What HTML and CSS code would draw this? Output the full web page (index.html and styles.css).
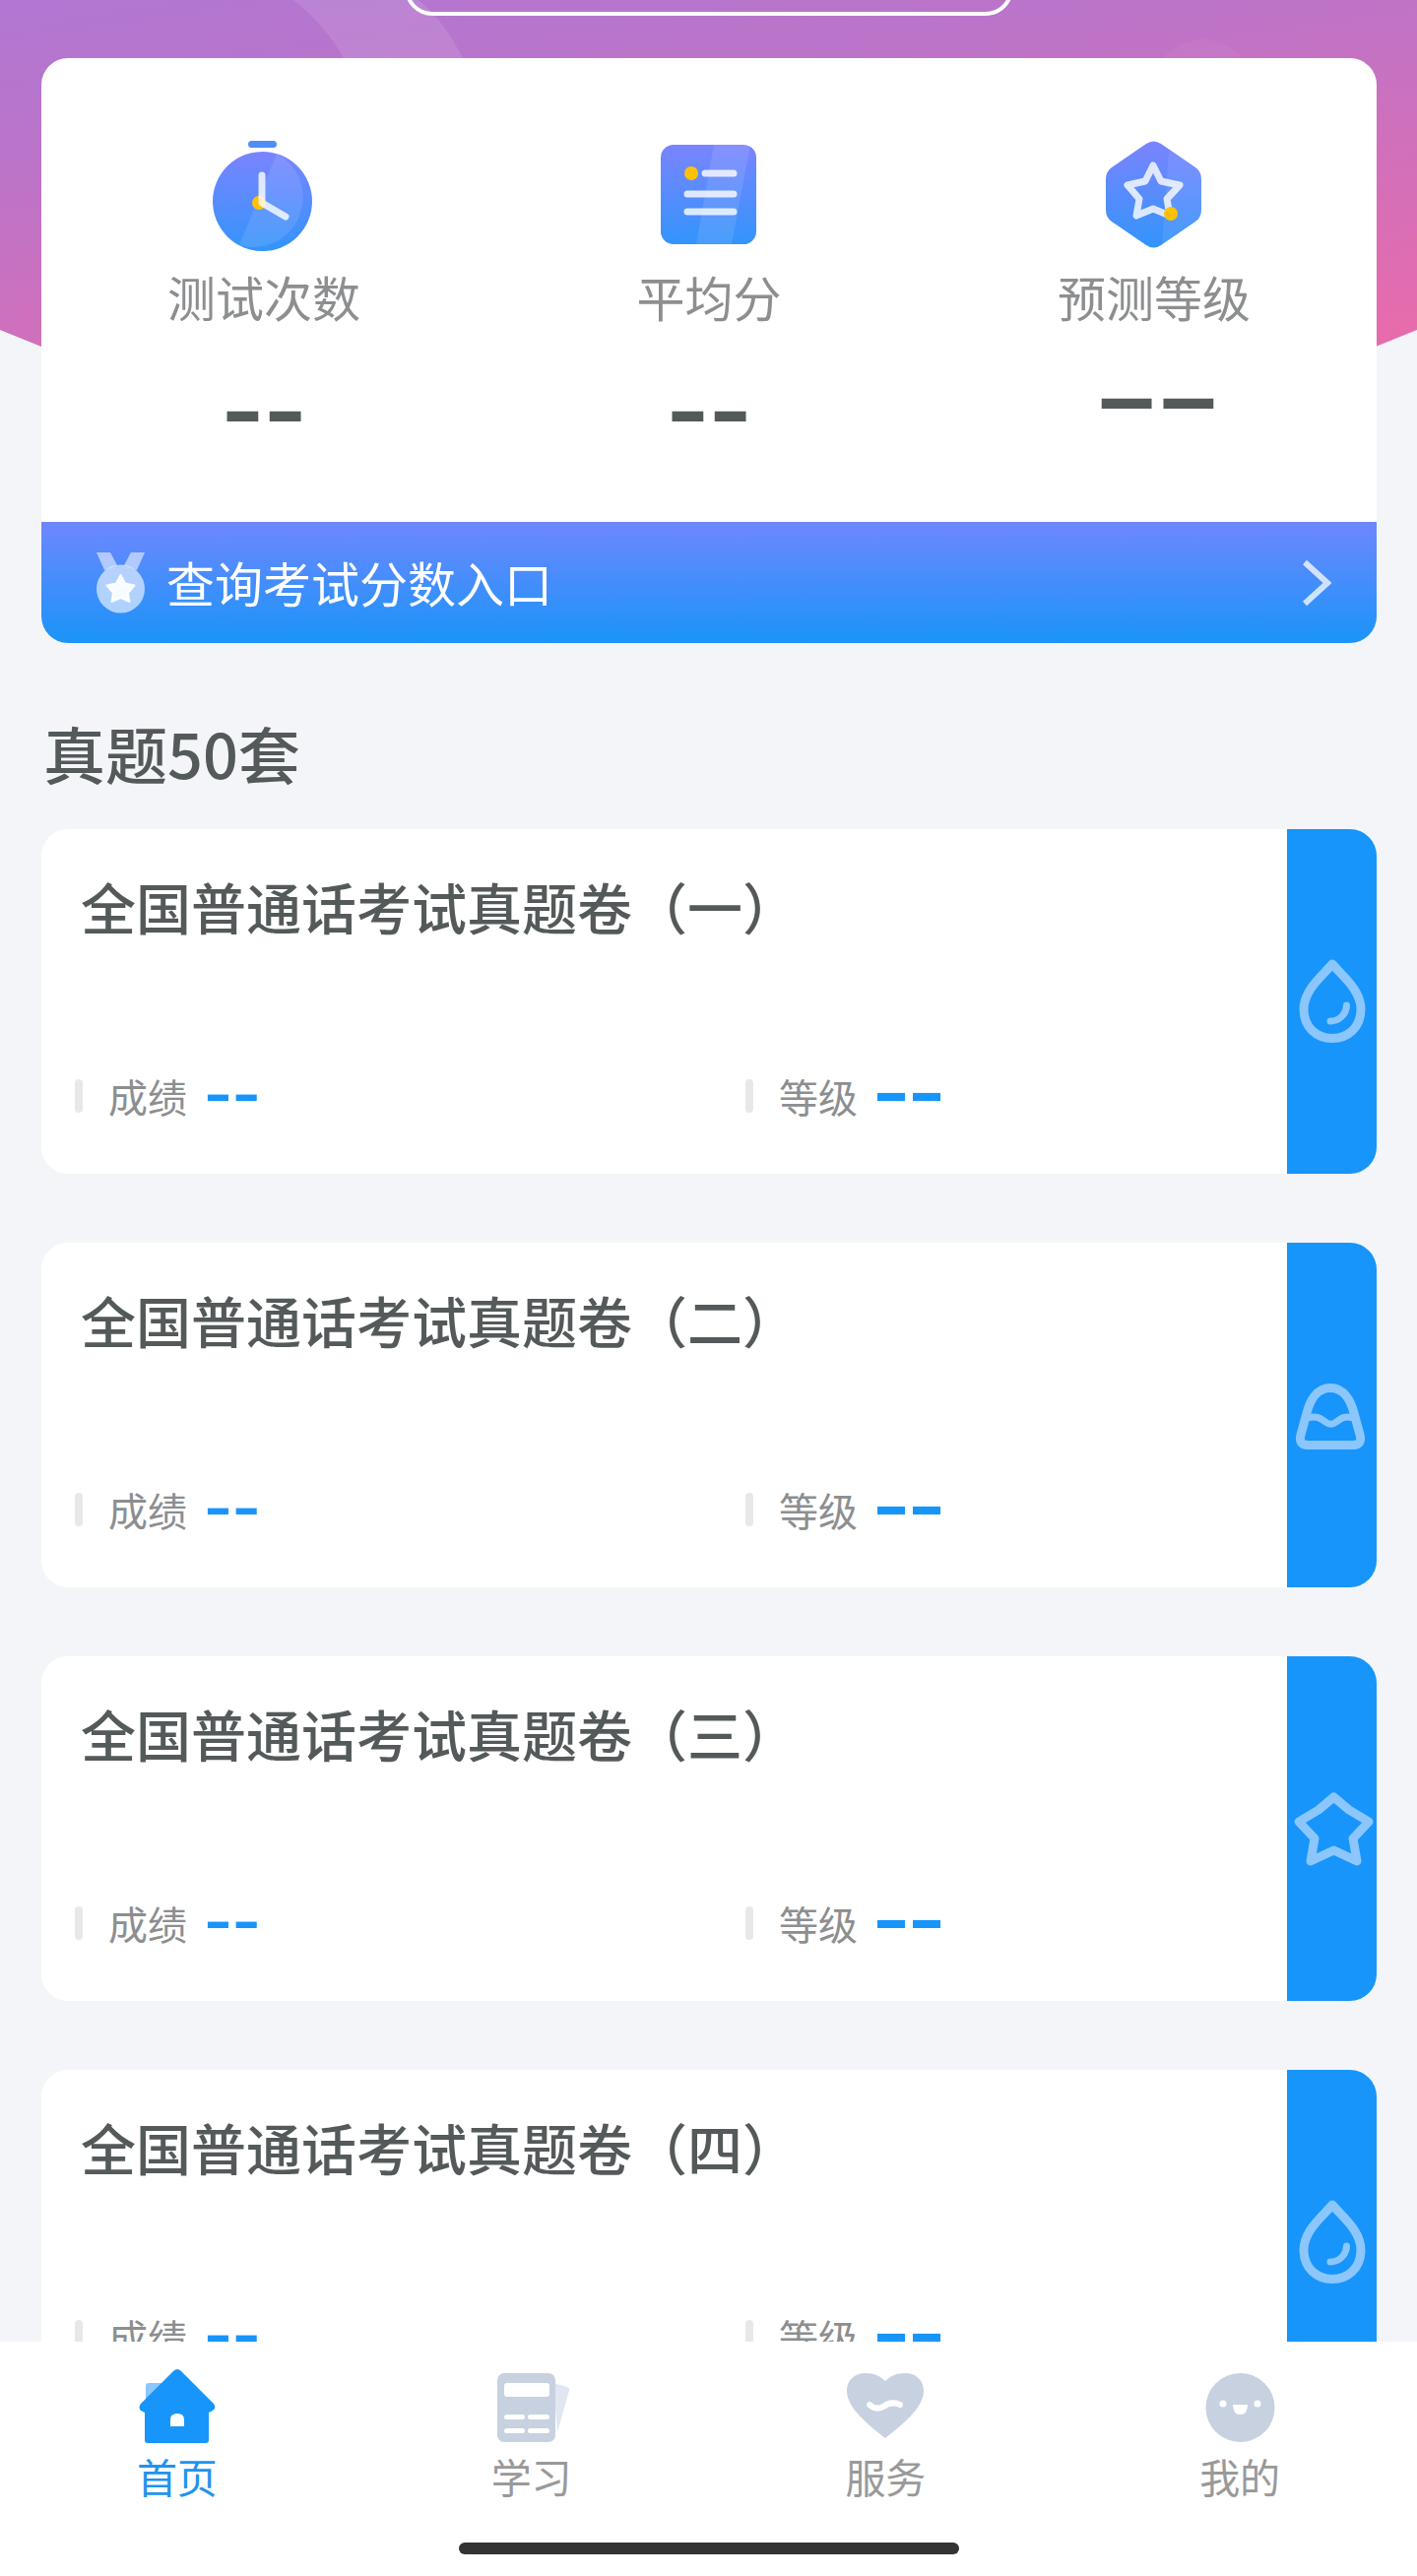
FILE: index.html
```html
<!DOCTYPE html>
<html lang="zh-CN">
<head>
    <meta charset="UTF-8">
    <meta name="viewport" content="width=device-width, initial-scale=1.0">
    <title>普通话考试</title>
    <link rel="stylesheet" href="styles.css">
</head>
<body>
    <svg class="sprite" width="0" height="0">
        <defs>
            <linearGradient id="statFill" x1="0" y1="0" x2="0" y2="1">
                <stop offset="0" stop-color="#7a84ff"/>
                <stop offset="1" stop-color="#3394fb"/>
            </linearGradient>
            <symbol id="drop" viewBox="0 0 80 100">
                <path d="M40 12 C30 24 11 38 11 58 C11 76 24 87.500 40 87.500 C56 87.500 69 76 69 58 C69 38 50 24 40 12 Z" fill="none" stroke="#8bc6fc" stroke-width="9" stroke-linejoin="round"/>
                <path d="M38 70 C46 70 54 64 54.500 54" fill="none" stroke="#8bc6fc" stroke-width="7" stroke-linecap="round"/>
            </symbol>
        </defs>
    </svg>

    <div class="page">
        <div class="hero">
            <svg class="hero-swoosh" width="1439" height="352" viewBox="0 0 1439 352">
                <path d="M298 0 Q330 25 349 59 L470 59 Q450 20 425 0 Z" fill="#fff" fill-opacity="0.1"/>
                <path d="M1180 59 Q1205 38 1225 40 Q1250 44 1262 59 Z" fill="#fff" fill-opacity="0.04"/>
            </svg>
            <div class="hero-search"></div>
        </div>

        <section class="stats">
            <div class="stats-body">
                <div class="stat">
                    <svg class="stat-icon" viewBox="0 0 120 120">
                        <rect x="44" y="4" width="29" height="7" rx="3.500" fill="#4f8df8"/>
                        <circle cx="58.500" cy="65.500" r="50.500" fill="url(#statFill)"/>
                        <path d="M73 17 A50.500 50.500 0 0 1 35 110 Z" fill="#fff" fill-opacity="0.1"/>
                        <circle cx="55" cy="67" r="7" fill="#ffc107"/>
                        <path d="M58 39 V67 L82 81" fill="none" stroke="#fff" stroke-opacity="0.8" stroke-width="7" stroke-linecap="round" stroke-linejoin="round"/>
                    </svg>
                    <div class="stat-label">测试次数</div>
                    <div class="stat-value">--</div>
                </div>
                <div class="stat">
                    <svg class="stat-icon" viewBox="0 0 120 120">
                        <rect x="11" y="8" width="97" height="101" rx="13" fill="url(#statFill)"/>
                        <path d="M65 8 H102 L83 109 H47 Z" fill="#fff" fill-opacity="0.1"/>
                        <circle cx="42" cy="37" r="7" fill="#ffc107"/>
                        <path d="M56 37 H85 M38 58 H85 M38 76 H85" fill="none" stroke="#fff" stroke-opacity="0.8" stroke-width="7" stroke-linecap="round"/>
                    </svg>
                    <div class="stat-label">平均分</div>
                    <div class="stat-value">--</div>
                </div>
                <div class="stat">
                    <svg class="stat-icon" viewBox="0 0 120 120">
                        <path d="M52 7 Q59.500 2 67 7 L102 31 Q108 35 108 43 V74 Q108 82 102 86 L67 110 Q59.500 115 52 110 L17 86 Q11 82 11 74 V43 Q11 35 17 31 Z" fill="url(#statFill)"/>
                        <path d="M75 14 L102 31 Q108 35 108 43 V74 Q108 82 102 86 L68 110 Z" fill="#fff" fill-opacity="0.08"/>
                        <path d="M59 29 L67 45 L86 49 L73 63 L76 80 L59 73 L42 80 L45 63 L33 49 L51 45 Z" fill="none" stroke="#fff" stroke-opacity="0.8" stroke-width="7" stroke-linejoin="round"/>
                        <circle cx="77" cy="78" r="7" fill="#ffc107"/>
                    </svg>
                    <div class="stat-label">预测等级</div>
                    <div class="stat-value stat-value-big">--</div>
                </div>
            </div>
            <a class="score-link">
                <svg class="medal" viewBox="0 0 49 62">
                    <path d="M0 0 H14 L21 13 L8 18 Z M49 0 H35 L28 13 L41 18 Z" fill="#fff" fill-opacity="0.55"/>
                    <circle cx="24.500" cy="37" r="24.500" fill="#fff" fill-opacity="0.6"/>
                    <path d="M24.500 23 L29 31.500 L38.500 33.500 L32 41 L33.500 50 L24.500 46 L15.500 50 L17 41 L10.500 33.500 L20 31.500 Z" fill="#fff" fill-opacity="0.9" stroke="#fff" stroke-opacity="0.9" stroke-width="2" stroke-linejoin="round"/>
                </svg>
                <span class="score-text">查询考试分数入口</span>
                <svg class="chevron" viewBox="0 0 30 48">
                    <path d="M3 3 L26 24 L3 45" fill="none" stroke="#fff" stroke-opacity="0.75" stroke-width="6"/>
                </svg>
            </a>
        </section>

        <h2 class="section-title">真题50套</h2>

        <div class="paper-list">
            <div class="paper">
                <div class="paper-body">
                    <div class="paper-title">全国普通话考试真题卷（一）</div>
                    <div class="paper-row">
                        <div class="paper-cell"><i class="tick"></i><span class="cell-label">成绩</span><span class="cell-value">--</span></div>
                        <div class="paper-cell"><i class="tick"></i><span class="cell-label">等级</span><span class="cell-value cell-value-wide">--</span></div>
                    </div>
                </div>
                <div class="paper-side"><svg class="side-icon" viewBox="0 0 80 100"><use href="#drop"/></svg></div>
            </div>
            <div class="paper">
                <div class="paper-body">
                    <div class="paper-title">全国普通话考试真题卷（二）</div>
                    <div class="paper-row">
                        <div class="paper-cell"><i class="tick"></i><span class="cell-label">成绩</span><span class="cell-value">--</span></div>
                        <div class="paper-cell"><i class="tick"></i><span class="cell-label">等级</span><span class="cell-value cell-value-wide">--</span></div>
                    </div>
                </div>
                <div class="paper-side">
                    <svg class="side-icon" viewBox="0 0 80 100">
                        <path d="M38 22.500 C24 22.500 17 36 14 48 L8 70 C6 77 9 80.500 15 80.500 H61 C67 80.500 70 77 68 70 L62 48 C59 36 52 22.500 38 22.500 Z" fill="none" stroke="#8bc6fc" stroke-width="9" stroke-linejoin="round"/>
                        <path d="M15 53 C24 50 29 54 33 57 C37 60 40 60 44 57 C48 54 53 50 61 53" fill="none" stroke="#8bc6fc" stroke-width="7" stroke-linecap="round"/>
                    </svg>
                </div>
            </div>
            <div class="paper">
                <div class="paper-body">
                    <div class="paper-title">全国普通话考试真题卷（三）</div>
                    <div class="paper-row">
                        <div class="paper-cell"><i class="tick"></i><span class="cell-label">成绩</span><span class="cell-value">--</span></div>
                        <div class="paper-cell"><i class="tick"></i><span class="cell-label">等级</span><span class="cell-value cell-value-wide">--</span></div>
                    </div>
                </div>
                <div class="paper-side">
                    <svg class="side-icon side-icon-star" viewBox="0 0 90 100">
                        <path d="M46.500 18 L62 31 L82 43 L66 60 L70 83 L46.500 72 L23 83 L27 60 L11 43 L31 31 Z" fill="none" stroke="#8bc6fc" stroke-width="9" stroke-linejoin="round"/>
                    </svg>
                </div>
            </div>
            <div class="paper">
                <div class="paper-body">
                    <div class="paper-title">全国普通话考试真题卷（四）</div>
                    <div class="paper-row">
                        <div class="paper-cell"><i class="tick"></i><span class="cell-label">成绩</span><span class="cell-value">--</span></div>
                        <div class="paper-cell"><i class="tick"></i><span class="cell-label">等级</span><span class="cell-value cell-value-wide">--</span></div>
                    </div>
                </div>
                <div class="paper-side"><svg class="side-icon" viewBox="0 0 80 100"><use href="#drop"/></svg></div>
            </div>
        </div>

        <nav class="tabbar">
            <div class="tabs">
                <div class="tab tab-active">
                    <svg class="tab-icon" viewBox="0 0 80 80">
                        <rect x="8" y="16" width="22" height="24" rx="3" fill="#8bc6fc"/>
                        <path d="M36 4 Q40 0 44 4 L77 37 Q80 41 76 44 L72 46 V74 Q72 77 69 77 H10 Q7 77 7 74 V46 L3 44 Q0 41 3 37 Z" fill="#1795fa"/>
                        <path d="M33 60 V53 Q33 47 40 47 Q47 47 47 53 V60 Z" fill="#fff"/>
                    </svg>
                    <span class="tab-label">首页</span>
                </div>
                <div class="tab">
                    <svg class="tab-icon" viewBox="0 0 80 80">
                        <path d="M62 16 L76 20 Q79 21 78 24 L66 66 Z" fill="#e1e7f1"/>
                        <rect x="5" y="6" width="59" height="70" rx="7" fill="#c8d1e0"/>
                        <rect x="12" y="16" width="46" height="14" rx="3" fill="#fff"/>
                        <rect x="12" y="48" width="21" height="5" rx="2.500" fill="#fff"/>
                        <rect x="36" y="48" width="22" height="5" rx="2.500" fill="#fff"/>
                        <rect x="12" y="62" width="21" height="5" rx="2.500" fill="#fff"/>
                        <rect x="36" y="62" width="22" height="5" rx="2.500" fill="#fff"/>
                    </svg>
                    <span class="tab-label">学习</span>
                </div>
                <div class="tab">
                    <svg class="tab-icon" viewBox="0 0 80 80">
                        <path d="M40 72 C25 60 1 42 1 24 C1 13 9 6 20 6 C29 6 35 9 40 14 C45 9 51 6 60 6 C71 6 79 13 79 24 C79 42 55 60 40 72 Z" fill="#c8d1e0"/>
                        <path d="M24 38 Q30 44 38 40 Q46 34 55 38" fill="none" stroke="#fff" stroke-width="6" stroke-linecap="round"/>
                    </svg>
                    <span class="tab-label">服务</span>
                </div>
                <div class="tab">
                    <svg class="tab-icon" viewBox="0 0 80 80">
                        <circle cx="40.500" cy="41" r="35" fill="#c8d1e0"/>
                        <circle cx="23" cy="37" r="3.500" fill="#fff"/>
                        <circle cx="58" cy="37" r="3.500" fill="#fff"/>
                        <path d="M33 38 H48 Q48 48 40.500 48 Q33 48 33 38 Z" fill="#fff"/>
                    </svg>
                    <span class="tab-label">我的</span>
                </div>
            </div>
            <div class="home-bar"></div>
        </nav>
    </div>
</body>
</html>
```

FILE: styles.css
```css
* {
    box-sizing: border-box;
}
html, body {
    margin: 0;
    padding: 0;
}
body {
    font-family: "Noto Sans CJK SC", "Liberation Sans", sans-serif;
    background-color: #f4f5f8;
}
.sprite {
    display: block;
    height: 0;
}
.page {
    position: relative;
    height: 2616px;
    overflow: hidden;
}

/* top banner */
.hero {
    display: flow-root;
    position: relative;
    height: 352px;
    background: linear-gradient(172deg, #b177d2 0%, #bb74c9 30%, #e96bab 100%);
    clip-path: polygon(0 0, 100% 0, 100% 335px, 1397px 352px, 42px 352px, 0 335px);
}
.hero-swoosh {
    position: absolute;
    top: 0;
    left: 0;
}
.hero-search {
    width: 618px;
    height: 56px;
    margin: -40px auto 0;
    border: 4px solid #fff;
    border-radius: 30px;
}

/* stats card */
.stats {
    position: relative;
    margin: -293px 41px 0 42px;
    border-radius: 27px;
    overflow: hidden;
    background-color: #fff;
}
.stats-body {
    display: grid;
    grid-template-columns: repeat(3, 1fr);
    height: 471px;
    padding-top: 80px;
}
.stat {
    display: flex;
    flex-direction: column;
    align-items: center;
}
.stat-icon {
    width: 120px;
    height: 120px;
}
.stat-label {
    margin-top: 10px;
    font-size: 49px;
    line-height: 64px;
    color: #8c8e90;
}
.stat-value {
    height: 100px;
    margin-top: 29px;
    font-family: "Liberation Sans", sans-serif;
    font-size: 130px;
    line-height: 100px;
    color: #54595a;
}
.stat-value-big {
    margin-top: 16px;
    letter-spacing: -4px;
    transform: scaleX(1.6);
}
.score-link {
    display: flex;
    align-items: center;
    height: 123px;
    padding: 0 46px 0 56px;
    background: linear-gradient(180deg, #6e87ff 0%, #1a94f8 100%);
}
.medal {
    width: 49px;
    height: 62px;
}
.score-text {
    flex: 1;
    margin: -2px 0 0 22px;
    font-size: 49px;
    line-height: 64px;
    color: #fff;
}
.chevron {
    width: 30px;
    height: 48px;
}

/* paper list */
.section-title {
    margin: 71px 0 38px 44px;
    font-size: 63px;
    font-weight: 500;
    line-height: 80px;
    color: #54595a;
}
.paper-list {
    display: flex;
    flex-direction: column;
    gap: 70px;
    margin: 0 41px 0 42px;
}
.paper {
    display: flex;
    flex-shrink: 0;
    height: 350px;
    border-radius: 27px;
    overflow: hidden;
    background-color: #fff;
}
.paper-body {
    flex: 1;
    display: flex;
    flex-direction: column;
    padding: 40px 0 59px 40px;
}
.paper-title {
    font-size: 56px;
    font-weight: 500;
    line-height: 76px;
    color: #54595a;
}
.paper-row {
    display: grid;
    grid-template-columns: 681px 1fr;
    margin: auto 0 0 -6px;
}
.paper-cell {
    display: flex;
    align-items: center;
    height: 40px;
}
.tick {
    width: 8px;
    height: 34px;
    border-radius: 4px;
    background-color: #e8e8e8;
}
.cell-label {
    margin-left: 26px;
    font-size: 40px;
    line-height: 54px;
    color: #8c8e90;
}
.cell-value {
    height: 40px;
    margin-left: 17px;
    font-family: "DejaVu Sans", sans-serif;
    font-size: 80px;
    line-height: 34px;
    color: #1795fa;
}
.cell-value-wide {
    margin-left: 16px;
    font-family: "Liberation Serif", serif;
    font-size: 108px;
    line-height: 20px;
}
.paper-side {
    display: flex;
    align-items: center;
    justify-content: center;
    width: 91px;
    background-color: #1795fa;
}
.side-icon {
    width: 80px;
    height: 100px;
}
.side-icon-star {
    width: 90px;
}

/* bottom tabs */
.tabbar {
    position: absolute;
    top: 2378px;
    left: 0;
    right: 0;
    bottom: 0;
    display: flex;
    flex-direction: column;
    background-color: #fff;
}
.tabs {
    display: grid;
    grid-template-columns: repeat(4, 1fr);
}
.tab {
    display: flex;
    flex-direction: column;
    align-items: center;
    padding-top: 26px;
}
.tab-icon {
    width: 80px;
    height: 80px;
}
.tab-label {
    margin-top: 3px;
    font-size: 41px;
    line-height: 54px;
    color: #999;
}
.tab-active .tab-label {
    color: #1f94ee;
}
.home-bar {
    align-self: center;
    width: 508px;
    height: 12px;
    margin-top: 41px;
    border-radius: 6px;
    background-color: #333;
}
```
